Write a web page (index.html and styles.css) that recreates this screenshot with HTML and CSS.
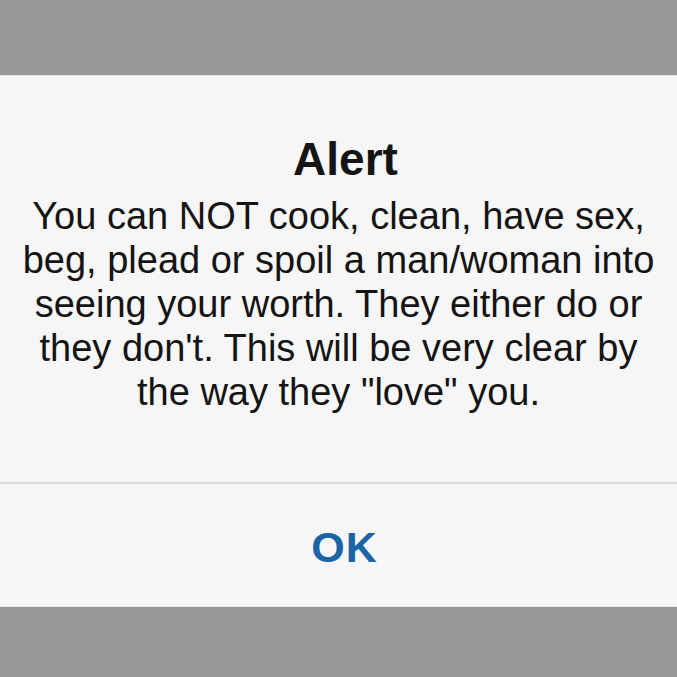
FILE: index.html
```html
<!DOCTYPE html>
<html>
<head>
<meta charset="utf-8">
<link rel="stylesheet" href="styles.css">
</head>
<body>
<div class="screen">
  <div class="alert">
    <div class="alert-content">
      <h1 class="alert-title">Alert</h1>
      <p class="alert-message">You can NOT cook, clean, have sex,<br>beg, plead or spoil a man/woman into<br>seeing your worth. They either do or<br>they don't. This will be very clear by<br>the way they "love" you.</p>
    </div>
    <div class="alert-actions">
      <span class="alert-button">OK</span>
    </div>
  </div>
</div>
</body>
</html>
```

FILE: styles.css
```css
html, body {
  margin: 0;
  padding: 0;
  background: #979797;
}
.screen {
  width: 677px;
  height: 677px;
  padding-top: 75px;
  box-sizing: border-box;
  background: #979797;
}
.alert {
  background: #f6f6f6;
  border-top: 1px solid #e2e2e2;
  border-bottom: 1px solid #e4e4e4;
}
.alert-content {
  height: 406px;
  padding-top: 58px;
  box-sizing: border-box;
  text-align: center;
  font-family: "Liberation Sans", Arial, sans-serif;
  color: #141414;
}
.alert-title {
  margin: 0;
  padding-left: 14px;
  font-size: 46px;
  line-height: 50px;
  font-weight: bold;
}
.alert-message {
  margin: 10px 0 0;
  font-size: 38px;
  line-height: 44px;
  font-weight: normal;
}
.alert-actions {
  height: 124px;
  padding-top: 4px;
  box-sizing: border-box;
  border-top: 2px solid #dadada;
  display: flex;
  align-items: center;
  justify-content: center;
}
.alert-button {
  padding-left: 12px;
  font-family: "Liberation Sans", Arial, sans-serif;
  font-weight: bold;
  font-size: 43px;
  color: #1b64a6;
  letter-spacing: 1px;
}
```
